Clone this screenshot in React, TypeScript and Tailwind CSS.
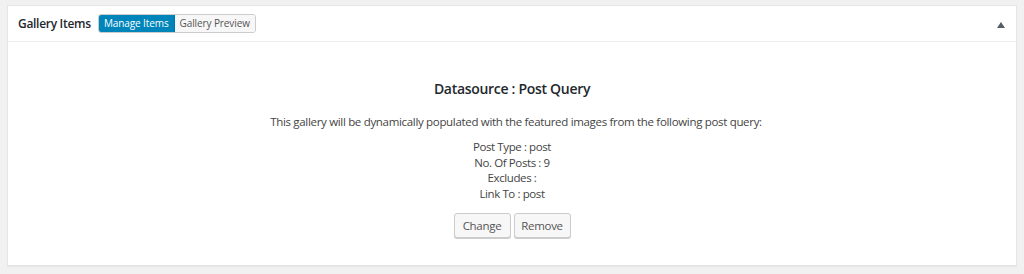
import React from "react";

export default function App() {
  return (
    <div className="w-[1024px] h-[274px] bg-[#f1f1f1] pt-[5px] pl-[7px] pr-[7px]" style={{ fontFamily: '"Open Sans", "Noto Sans", sans-serif' }}>
      <div className="bg-white border border-[#e5e5e5] shadow-[0_1px_1px_rgba(0,0,0,0.04)] h-[261px] flex flex-col">
        <div className="h-[36px] border-b border-[#eeeeee] flex items-center pl-[10px] pr-[11px]">
          <span className="text-[12px] font-semibold text-[#23282d] tracking-[-0.3px]">Gallery Items</span>
          <div className="ml-[7px] mb-[1px] flex h-[19px] rounded-[3px] overflow-hidden border border-[#cccccc]">
            <div className="bg-[#0085ba] text-white text-[10px] flex items-center justify-center w-[76px] border-r border-[#0073aa] tracking-[-0.1px]">Manage Items</div>
            <div className="bg-[#f7f7f7] text-[#555] text-[10px] flex items-center justify-center w-[80px] tracking-[-0.1px]">Gallery Preview</div>
          </div>
          <div className="ml-auto w-0 h-0 border-l-[4px] border-r-[4px] border-b-[6px] border-l-transparent border-r-transparent border-b-[#555d66] mt-[2px]"></div>
        </div>
        <div className="flex flex-col items-center text-[#444]">
          <div className="mt-[37px] text-[14px] font-semibold text-[#23282d] leading-[20px] tracking-[-0.3px]">Datasource : Post Query</div>
          <div className="mt-[15px] ml-[8px] text-[11.5px] leading-[16px] tracking-[-0.32px]">This gallery will be dynamically populated with the featured images from the following post query:</div>
          <div className="mt-[9px] text-[11.5px] leading-[15.5px] text-center tracking-[-0.4px]">
            <div>Post Type : post</div>
            <div>No. Of Posts : 9</div>
            <div>Excludes :</div>
            <div>Link To : post</div>
          </div>
          <div className="mt-[12px] flex gap-[3px]">
            <button className="h-[25px] w-[57px] text-[11.5px] text-[#555] bg-[#f7f7f7] border border-[#cccccc] rounded-[3px] shadow-[0_1px_0_#cccccc] tracking-[-0.3px]">Change</button>
            <button className="h-[25px] w-[57px] text-[11.5px] text-[#555] bg-[#f7f7f7] border border-[#cccccc] rounded-[3px] shadow-[0_1px_0_#cccccc] tracking-[-0.3px]">Remove</button>
          </div>
        </div>
      </div>
    </div>
  );
}
